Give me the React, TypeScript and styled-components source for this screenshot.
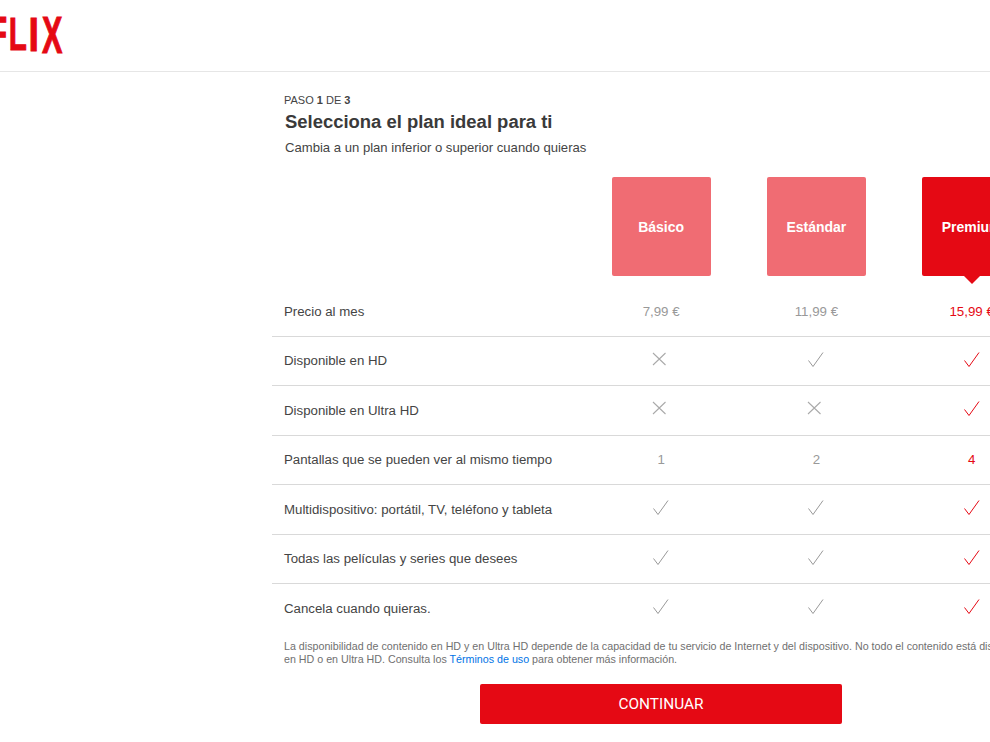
import styled, { createGlobalStyle } from "styled-components";

const GlobalStyle = createGlobalStyle`
  html, body {
    margin: 0;
    padding: 0;
    height: 100%;
    overflow: hidden;
    background: #fff;
  }
`;

const Page = styled.div`
  width: 990px;
  height: 742px;
  overflow: hidden;
  font-family: "Liberation Sans", Arial, sans-serif;
  color: #333;
`;

const Header = styled.header`
  height: 71px;
  border-bottom: 1px solid #e6e6e6;
`;

const Logo = styled.svg`
  display: block;
  width: 70px;
  height: 71px;
`;

const Content = styled.main`
  width: 780px;
  margin-left: 272px;
`;

const Intro = styled.div`
  padding: 22px 0 0 12px;
`;

const Step = styled.div`
  font-size: 11px;
  line-height: 13px;
  color: #444;
  b { font-weight: 700; }
`;

const Title = styled.h1`
  margin: 2px 0 0 1px;
  font-size: 18.45px;
  line-height: 26px;
  font-weight: 700;
  color: #3a3a3a;
`;

const Subtitle = styled.p`
  margin: 4px 0 0 1px;
  font-size: 13.1px;
  line-height: 18px;
  color: #444;
`;

const PlanRow = styled.div`
  display: grid;
  grid-template-columns: 311.5px repeat(3, 155.25px);
  justify-items: center;
  margin: 20px 0 11px;
`;

const PlanBox = styled.div<{ $active?: boolean }>`
  position: relative;
  width: 99px;
  height: 99px;
  display: flex;
  align-items: center;
  justify-content: center;
  border-radius: 2px;
  background: ${(p) => (p.$active ? "#e50914" : "#f06c73")};
  color: #fff;
  font-size: 14px;
  font-weight: 700;
  ${(p) =>
    p.$active &&
    `&::after {
      content: "";
      position: absolute;
      left: 50%;
      bottom: -8px;
      margin-left: -8px;
      border-left: 8px solid transparent;
      border-right: 8px solid transparent;
      border-top: 8px solid #e50914;
    }`}
`;

const Row = styled.div`
  display: grid;
  grid-template-columns: 311.5px repeat(3, 155.25px);
  align-items: center;
  justify-items: center;
  height: 48.5px;
  border-bottom: 1px solid #d9d9d9;
  &:last-of-type { border-bottom: none; }
`;

const RowLabel = styled.div`
  justify-self: start;
  padding-left: 12px;
  font-size: 13.25px;
  color: #444;
`;

const Cell = styled.div<{ $active?: boolean }>`
  display: flex;
  font-size: 13.3px;
  color: ${(p) => (p.$active ? "#e50914" : "#999")};
`;

const Note = styled.p`
  margin: 7px 0 0;
  padding-left: 12px;
  width: 750px;
  font-size: 10.7px;
  line-height: 13px;
  color: #707070;
  a { color: #0073e6; text-decoration: none; }
`;

const Continue = styled.button`
  display: block;
  width: 362px;
  height: 40px;
  margin: 18px 0 0 208px;
  border: none;
  border-radius: 2px;
  background: #e50914;
  color: #fff;
  font-family: Roboto, "Liberation Sans", sans-serif;
  font-size: 15.4px;
  cursor: pointer;
`;

const Check = ({ color }: { color: string }) => (
  <svg width="18" height="18" viewBox="0 0 18 18" fill="none" stroke={color} strokeWidth="1">
    <path d="M1.5 8.5 L6 14.5 L16 0.5" />
  </svg>
);

const Cross = () => (
  <svg width="18" height="18" viewBox="0 0 18 18" fill="none" stroke="#aaa" strokeWidth="1.1">
    <path d="M1 1 L13.5 13 M13.5 1 L1 13" />
  </svg>
);

type Value = "yes" | "no" | string;

const rows: { label: string; values: Value[] }[] = [
  { label: "Precio al mes", values: ["7,99 €", "11,99 €", "15,99 €"] },
  { label: "Disponible en HD", values: ["no", "yes", "yes"] },
  { label: "Disponible en Ultra HD", values: ["no", "no", "yes"] },
  { label: "Pantallas que se pueden ver al mismo tiempo", values: ["1", "2", "4"] },
  { label: "Multidispositivo: portátil, TV, teléfono y tableta", values: ["yes", "yes", "yes"] },
  { label: "Todas las películas y series que desees", values: ["yes", "yes", "yes"] },
  { label: "Cancela cuando quieras.", values: ["yes", "yes", "yes"] },
];

const plans = ["Básico", "Estándar", "Premium"];

// each letter of the logo sits on its own baseline, the word bends down to the right
const logoLetters = [
  { ch: "F", x: -10.9, y: 49, sx: 0.63, sy: 1 },
  { ch: "L", x: 8.8, y: 49.5, sx: 0.63, sy: 1 },
  { ch: "I", x: 28.6, y: 51, sx: 0.8, sy: 1.04 },
  { ch: "X", x: 42, y: 53, sx: 0.65, sy: 1.1 },
];

const App = () => {
  return (
    <Page>
      <GlobalStyle />
      <Header>
        <Logo viewBox="0 0 70 71">
          {logoLetters.map((l) => (
            <text
              key={l.ch}
              transform={`translate(${l.x} ${l.y}) scale(${l.sx} ${l.sy})`}
              fontFamily="Liberation Sans"
              fontWeight="700"
              fontSize="47"
              fill="#e50914"
              stroke="#e50914"
              strokeWidth="1"
            >
              {l.ch}
            </text>
          ))}
        </Logo>
      </Header>
      <Content>
        <Intro>
          <Step>
            PASO <b>1</b> DE <b>3</b>
          </Step>
          <Title>Selecciona el plan ideal para ti</Title>
          <Subtitle>Cambia a un plan inferior o superior cuando quieras</Subtitle>
        </Intro>
        <PlanRow>
          <div />
          {plans.map((plan, i) => (
            <PlanBox key={plan} $active={i === 2}>
              {plan}
            </PlanBox>
          ))}
        </PlanRow>
        <div>
          {rows.map((row) => (
            <Row key={row.label}>
              <RowLabel>{row.label}</RowLabel>
              {row.values.map((value, i) => (
                <Cell key={i} $active={i === 2}>
                  {value === "yes" ? (
                    <Check color={i === 2 ? "#e50914" : "#999"} />
                  ) : value === "no" ? (
                    <Cross />
                  ) : (
                    value
                  )}
                </Cell>
              ))}
            </Row>
          ))}
        </div>
        <Note>
          La disponibilidad de contenido en HD y en Ultra HD depende de la capacidad de tu servicio de Internet y del dispositivo. No todo el contenido está disponible en HD o en Ultra HD. Consulta los <a href="#">Términos de uso</a> para obtener más información.
        </Note>
        <Continue>CONTINUAR</Continue>
      </Content>
    </Page>
  );
};

export default App;
